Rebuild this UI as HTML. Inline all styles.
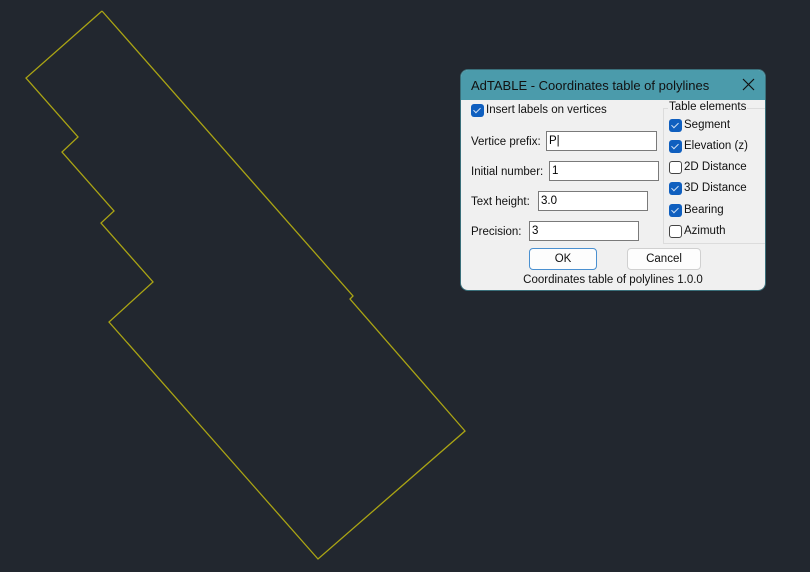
<!DOCTYPE html>
<html><head><meta charset="utf-8"><style>
body{margin:0;width:810px;height:572px;background:#22272f;overflow:hidden;position:relative;font-family:"Liberation Sans",sans-serif;}
svg{position:absolute;left:0;top:0}
.dlg{position:absolute;left:461px;top:70px;width:304px;height:220px;background:#f0f0f0;border-radius:7px;overflow:hidden;box-shadow:0 0 0 1px #3a6f7a}
.tb{height:30px;background:#4b9bab;color:#111;font-size:13px;line-height:31px;padding-left:10px}
.x{position:absolute;right:11px;top:8px}
.a{position:absolute;font-size:11.5px;color:#111}
.in{position:absolute;background:#fff;border:1px solid #7a7a7a;height:20px;font-size:11.5px;line-height:18px;padding-left:2px;box-sizing:border-box}
.cb{position:absolute;width:13px;height:13px;border-radius:3px;box-sizing:border-box}
.cb.on{background:#0f5fbf}
.cb.on:after{content:"";position:absolute;left:4px;top:2px;width:3px;height:6px;border:solid #cfe0f5;border-width:0 1.3px 1.3px 0;transform:rotate(45deg)}
.cb.off{background:#fff;border:1px solid #444}
.btn{position:absolute;height:22px;background:#fdfdfd;border:1px solid #d0d0d0;border-radius:4px;box-sizing:border-box;text-align:center;font-size:11.5px;line-height:20px;color:#111}
</style></head><body>
<svg width="810" height="572"><polyline fill="none" stroke="#aaa414" stroke-width="1.3" points="102,11 26,78 78,137 62,152 114,211 101,223 153,282 109,322 318,559 465,431 350,299 353,296 102,11"/></svg>
<div class="dlg">
<div class="tb">AdTABLE - Coordinates table of polylines</div>
<svg class="x" width="13" height="13" style="position:absolute;left:281px;top:8px"><path d="M1 1L12 12M12 1L1 12" stroke="#111" stroke-width="1.2"/></svg>
<div class="cb on" style="left:10px;top:34px"></div><div class="a" style="left:25px;top:34px">Insert labels on vertices</div>
<div class="a" style="left:10px;top:66px">Vertice prefix:</div><div class="in" style="left:85px;top:61px;width:111px">P|</div>
<div class="a" style="left:10px;top:96px">Initial number:</div><div class="in" style="left:88px;top:91px;width:110px">1</div>
<div class="a" style="left:10px;top:126px">Text height:</div><div class="in" style="left:77px;top:121px;width:110px">3.0</div>
<div class="a" style="left:10px;top:156px">Precision:</div><div class="in" style="left:68px;top:151px;width:110px">3</div>
<div style="position:absolute;left:202px;top:38px;width:102px;height:136px;border:1px solid #dcdcdc;border-right:none;box-sizing:border-box"></div>
<div class="a" style="left:207px;top:31px;background:#f0f0f0;padding:0 1px">Table elements</div>
<div class="cb on" style="left:208px;top:49px"></div><div class="a" style="left:223px;top:49px">Segment</div>
<div class="cb on" style="left:208px;top:70px"></div><div class="a" style="left:223px;top:70px">Elevation (z)</div>
<div class="cb off" style="left:208px;top:91px"></div><div class="a" style="left:223px;top:91px">2D Distance</div>
<div class="cb on" style="left:208px;top:112px"></div><div class="a" style="left:223px;top:112px">3D Distance</div>
<div class="cb on" style="left:208px;top:134px"></div><div class="a" style="left:223px;top:134px">Bearing</div>
<div class="cb off" style="left:208px;top:155px"></div><div class="a" style="left:223px;top:155px">Azimuth</div>
<div class="btn" style="left:68px;top:178px;width:68px;border:1px solid #4a90d0">OK</div>
<div class="btn" style="left:166px;top:178px;width:74px">Cancel</div>
<div class="a" style="left:0;width:304px;text-align:center;top:204px">Coordinates table of polylines 1.0.0</div>
</div>
</body></html>
